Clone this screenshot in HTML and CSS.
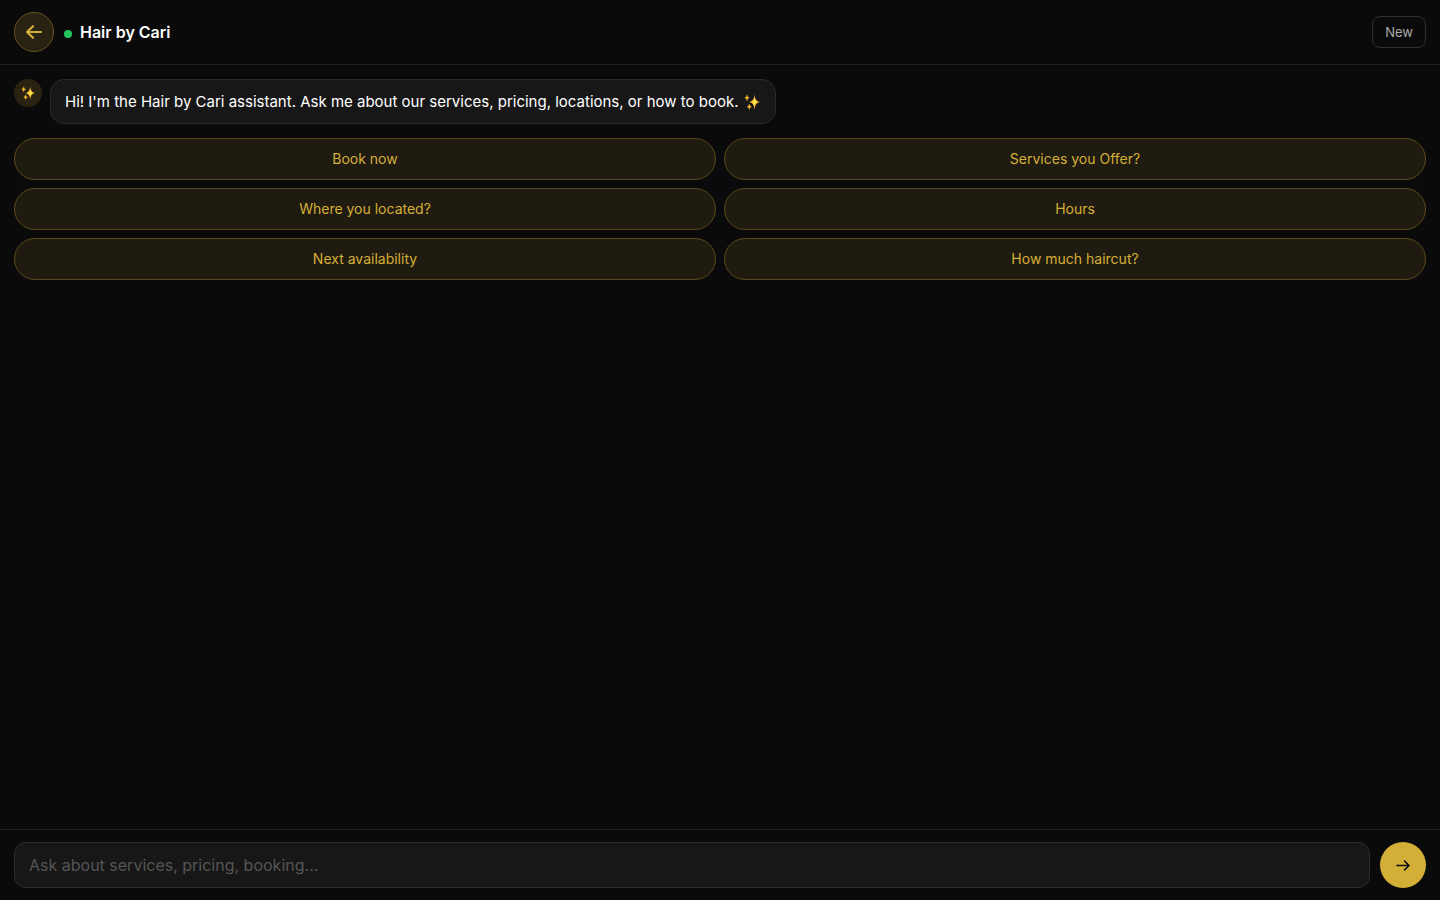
FILE: index.html
```html
<!DOCTYPE html>
<html lang="en">
<head>
<meta charset="utf-8">
<meta name="viewport" content="width=device-width, initial-scale=1">
<title>Hair by Cari</title>
<link rel="stylesheet" href="styles.css">
</head>
<body>
<svg width="0" height="0" class="sprite" aria-hidden="true">
  <symbol id="sparkles" viewBox="0 0 16 16">
    <path fill="#e9a52b" d="M10.5 .5 Q10.9 7.300 16 8 Q10.900 8.700 10.500 15.500 Q10.100 8.700 5 8 Q10.100 7.300 10.500 .5Z"/>
    <path fill="#ffe24a" d="M10.500 4 Q10.900 7.400 13.600 8 Q10.900 8.600 10.500 12 Q10.100 8.600 7.400 8 Q10.100 7.400 10.500 4Z" stroke="#ffe24a" stroke-width=".5"/>
    <path fill="#f5b92e" stroke="#f5b92e" stroke-width=".3" d="M3 .8 Q3.300 3.300 5.300 3.800 Q3.300 4.300 3 6.800 Q2.700 4.300 .7 3.800 Q2.700 3.300 3 .8Z"/>
    <path fill="#f5b92e" stroke="#f5b92e" stroke-width=".3" d="M5.300 10 Q5.600 12.300 7.500 12.800 Q5.600 13.300 5.300 15.600 Q5 13.300 3.100 12.800 Q5 12.300 5.300 10Z"/>
  </symbol>
</svg>
<div class="chat">
  <header class="header">
    <button class="back" type="button" aria-label="Back">
      <svg width="20" height="20" viewBox="0 0 20 20" fill="none" stroke="currentColor" stroke-width="2.200" stroke-linecap="round" stroke-linejoin="round"><path d="M17 10H3M9 4.200L3 10l6 5.800"/></svg>
    </button>
    <div class="brand">
      <span class="status"></span>
      <h1 class="title">Hair by Cari</h1>
    </div>
    <button class="new" type="button">New</button>
  </header>
  <main class="messages">
    <div class="message">
      <div class="avatar"><svg width="14" height="14" aria-hidden="true"><use href="#sparkles"/></svg></div>
      <p class="bubble">Hi! I'm the Hair by Cari assistant. Ask me about our services, pricing, locations, or how to book. <svg class="emoji" width="18" height="16" aria-hidden="true"><use href="#sparkles"/></svg></p>
    </div>
    <div class="chips">
      <button class="chip" type="button">Book now</button>
      <button class="chip" type="button">Services you Offer?</button>
      <button class="chip" type="button">Where you located?</button>
      <button class="chip" type="button">Hours</button>
      <button class="chip" type="button">Next availability</button>
      <button class="chip" type="button">How much haircut?</button>
    </div>
  </main>
  <form class="composer">
    <input class="field" type="text" aria-label="Message" placeholder="Ask about services, pricing, booking...">
    <button class="send" type="button" aria-label="Send">
      <svg width="16" height="16" viewBox="0 0 16 16" fill="none" stroke="currentColor" stroke-width="1.600" stroke-linecap="round" stroke-linejoin="round"><path d="M2 8.500h12M9.500 4l4.500 4.500-4.500 4.500"/></svg>
    </button>
  </form>
</div>
</body>
</html>
```
FILE: styles.css
```css
* { box-sizing: border-box; }
body {
  margin: 0;
  background: #0a0a0a;
  color: #fff;
  font-family: Inter, "Liberation Sans", sans-serif;
}
button, input { font: inherit; }
.sprite { position: absolute; }
.chat { display: flex; flex-direction: column; min-height: 100vh; }
.header {
  display: flex;
  align-items: center;
  gap: 10px;
  padding: 12px 14px;
  border-bottom: 1px solid #1f1f1f;
}
.back {
  display: flex;
  align-items: center;
  justify-content: center;
  width: 40px;
  height: 40px;
  padding: 0;
  border: 1px solid #66541e;
  border-radius: 50%;
  background: #282212;
  color: #d4af37;
}
.brand { display: flex; flex: 1; align-items: center; gap: 8px; }
.status { width: 8px; height: 8px; margin-top: 3px; border-radius: 50%; background: #22c55e; }
.title { margin: 0; font-size: 16px; line-height: 20px; font-weight: 600; }
.new {
  height: 32px;
  padding: 0 12px;
  border: 1px solid #2e2e2e;
  border-radius: 8px;
  background: transparent;
  color: #aaa;
  font-size: 13px;
}
.messages { display: flex; flex: 1; flex-direction: column; gap: 14px; padding: 14px; }
.message { display: flex; align-items: flex-start; gap: 8px; }
.avatar {
  display: flex;
  align-items: center;
  justify-content: center;
  flex: none;
  width: 28px;
  height: 28px;
  border-radius: 50%;
  background: #2a2312;
}
.bubble {
  margin: 0;
  padding: 11px 14px;
  border: 1px solid #2a2a2a;
  border-radius: 14px;
  background: #171717;
  font-size: 15px;
  line-height: 21px;
}
.emoji { vertical-align: -3px; }
.chips { display: grid; grid-template-columns: 1fr 1fr; gap: 8px; }
.chip {
  height: 42px;
  padding: 0 14px 2px;
  border: 1px solid #5a491a;
  border-radius: 21px;
  background: #201b10;
  color: #d4af37;
  font-size: 14px;
}
.composer {
  display: flex;
  align-items: center;
  gap: 10px;
  padding: 12px 14px;
  border-top: 1px solid #1f1f1f;
}
.field {
  flex: 1;
  min-width: 0;
  height: 46px;
  padding: 0 14px;
  border: 1px solid #2e2e2e;
  border-radius: 12px;
  background: #171717;
  color: #fff;
  font-size: 16px;
}
.field::placeholder { color: #555; opacity: 1; }
.send {
  display: flex;
  align-items: center;
  justify-content: center;
  width: 46px;
  height: 46px;
  padding: 0;
  border: 0;
  border-radius: 50%;
  background: #d4af37;
  color: #0a0a0a;
}
```
